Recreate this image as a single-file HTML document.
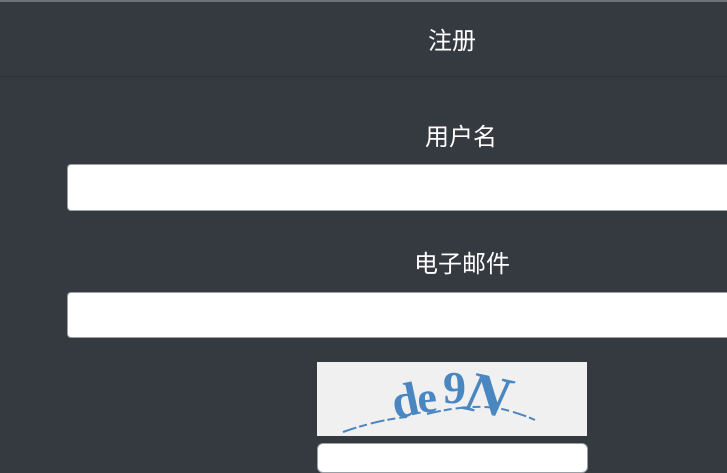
<!DOCTYPE html>
<html><head><meta charset="utf-8"><style>
html,body{margin:0;padding:0;width:727px;height:458px;overflow:hidden;background:#343a40;font-family:"Liberation Sans","Noto Sans CJK SC",sans-serif;color:#fff}
.top{position:absolute;left:0;top:0;width:727px;height:2px;background:#6c7278}
.hdr{position:absolute;left:0;top:2px;width:727px;height:74px;border-bottom:1px solid #2b3035;}
.t{position:absolute;width:300px;text-align:center;font-size:24px;line-height:30px;white-space:nowrap}
.inp{position:absolute;background:#fff;border-radius:4px;border:1px solid #9aa0a6;box-sizing:border-box}
.cap{position:absolute;left:317px;top:362px;width:270px;height:74px;background:#f0f0f0;overflow:hidden}
</style></head><body>
<div class="top"></div>
<div class="hdr"></div>
<div class="t" style="left:302px;top:27px;">注册</div>
<div class="t" style="left:311px;top:123px;">用户名</div>
<div class="inp" style="left:67px;top:164px;width:680px;height:47px"></div>
<div class="t" style="left:312px;top:250px;">电子邮件</div>
<div class="inp" style="left:67px;top:292px;width:680px;height:46px"></div>
<div class="cap"><svg width="270" height="74" font-family="Liberation Serif" font-weight="bold" fill="#4a86c0">
<text x="74" y="54" font-size="48" transform="rotate(-12 90 35)">d</text>
<text x="100" y="50" font-size="44" transform="rotate(-6 110 35)">e</text>
<text x="126" y="41" font-size="46">9</text>
<text x="158" y="56" font-size="58" transform="rotate(12 190 35) skewX(-12)">N</text>
<path d="M26 70 Q60 58 90 55 M110 52 Q150 42 180 46 Q200 50 218 58" stroke="#4a86c0" stroke-width="2" fill="none" stroke-dasharray="14 3 8 4"/>
</svg></div>
<div class="inp" style="left:317px;top:443px;width:271px;height:30px;border-radius:6px"></div>
</body></html>
